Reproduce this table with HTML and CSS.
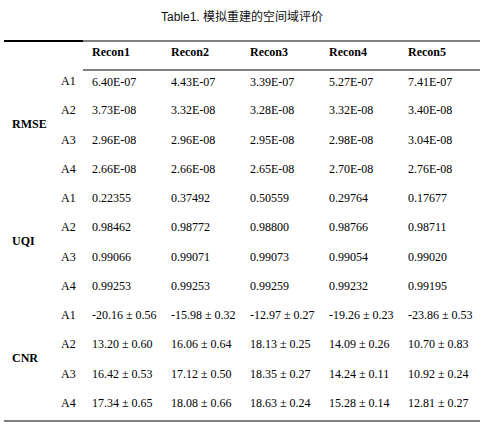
FILE: index.html
```html
<!DOCTYPE html>
<html>
<head>
<meta charset="utf-8">
<link rel="stylesheet" href="styles.css">
</head>
<body>
<div class="wrap">
  <div class="title">Table1.&nbsp;模拟重建的空间域评价</div>
  <table class="tbl">
    <colgroup>
      <col class="c-group"><col class="c-sub"><col class="c-val"><col class="c-val"><col class="c-val"><col class="c-val"><col class="c-last">
    </colgroup>
    <thead>
      <tr>
        <th class="corner" colspan="2"></th>
        <th>Recon1</th><th>Recon2</th><th>Recon3</th><th>Recon4</th><th>Recon5</th>
      </tr>
    </thead>
    <tbody>
      <tr><td class="grp" rowspan="4">RMSE</td><td class="sub">A1</td><td>6.40E-07</td><td>4.43E-07</td><td>3.39E-07</td><td>5.27E-07</td><td>7.41E-07</td></tr>
      <tr><td class="sub">A2</td><td>3.73E-08</td><td>3.32E-08</td><td>3.28E-08</td><td>3.32E-08</td><td>3.40E-08</td></tr>
      <tr><td class="sub">A3</td><td>2.96E-08</td><td>2.96E-08</td><td>2.95E-08</td><td>2.98E-08</td><td>3.04E-08</td></tr>
      <tr><td class="sub">A4</td><td>2.66E-08</td><td>2.66E-08</td><td>2.65E-08</td><td>2.70E-08</td><td>2.76E-08</td></tr>
      <tr><td class="grp" rowspan="4">UQI</td><td class="sub">A1</td><td>0.22355</td><td>0.37492</td><td>0.50559</td><td>0.29764</td><td>0.17677</td></tr>
      <tr><td class="sub">A2</td><td>0.98462</td><td>0.98772</td><td>0.98800</td><td>0.98766</td><td>0.98711</td></tr>
      <tr><td class="sub">A3</td><td>0.99066</td><td>0.99071</td><td>0.99073</td><td>0.99054</td><td>0.99020</td></tr>
      <tr><td class="sub">A4</td><td>0.99253</td><td>0.99253</td><td>0.99259</td><td>0.99232</td><td>0.99195</td></tr>
      <tr><td class="grp grp-last" rowspan="4">CNR</td><td class="sub">A1</td><td>-20.16 ± 0.56</td><td>-15.98 ± 0.32</td><td>-12.97 ± 0.27</td><td>-19.26 ± 0.23</td><td>-23.86 ± 0.53</td></tr>
      <tr><td class="sub">A2</td><td>13.20 ± 0.60</td><td>16.06 ± 0.64</td><td>18.13 ± 0.25</td><td>14.09 ± 0.26</td><td>10.70 ± 0.83</td></tr>
      <tr><td class="sub">A3</td><td>16.42 ± 0.53</td><td>17.12 ± 0.50</td><td>18.35 ± 0.27</td><td>14.24 ± 0.11</td><td>10.92 ± 0.24</td></tr>
      <tr class="last"><td class="sub">A4</td><td>17.34 ± 0.65</td><td>18.08 ± 0.66</td><td>18.63 ± 0.24</td><td>15.28 ± 0.14</td><td>12.81 ± 0.27</td></tr>
    </tbody>
  </table>
</div>
</body>
</html>
```

FILE: styles.css
```css
html, body {
  margin: 0;
  padding: 0;
  background: #fff;
}
.wrap {
  padding-left: 4px;
  width: 476px;
}
.title {
  height: 34px;
  line-height: 34px;
  padding-bottom: 6px;
  text-align: center;
  font-family: "Liberation Sans", "Noto Sans CJK SC", sans-serif;
  font-size: 12px;
  color: #111;
}
.tbl {
  border-collapse: collapse;
  table-layout: fixed;
  width: 476px;
  font-family: "Liberation Serif", serif;
  font-size: 12px;
  color: #000;
}
.c-group { width: 49px; }
.c-sub { width: 30px; }
.c-val { width: 79px; }
.c-last { width: 81px; }
.tbl th {
  font-weight: bold;
  text-align: left;
  height: 29px;
  padding: 3px 0 0 9px;
  line-height: 14px;
  vertical-align: top;
  box-sizing: border-box;
  border-top: 2px solid #808080;
  border-bottom: 2px solid #808080;
}
.tbl th.corner {
  border-top: 2px solid #000;
  border-bottom: none;
}
.tbl td {
  text-align: left;
  height: 29.25px;
  padding: 4px 0 0 9px;
  line-height: 14px;
  vertical-align: top;
  box-sizing: border-box;
  white-space: nowrap;
}
.tbl td.sub {
  padding-left: 8px;
}
.tbl td.grp {
  font-weight: bold;
  padding: 0 0 9px 8px;
  vertical-align: middle;
}
.tbl tr.last td,
.tbl td.grp-last {
  border-bottom: 2px solid #808080;
}
```
